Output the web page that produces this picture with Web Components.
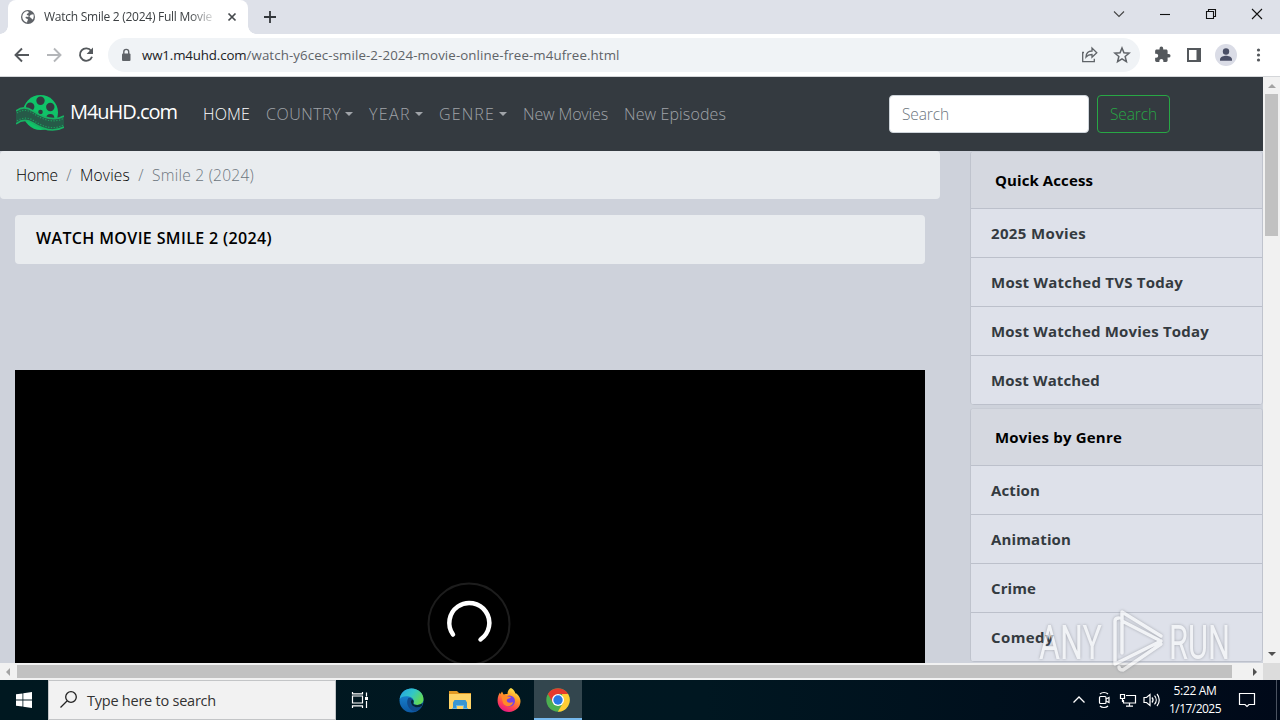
<!DOCTYPE html>
<html lang="en">
<head>
<meta charset="utf-8">
<title>Watch Smile 2 (2024) Full Movie</title>
<style>
html,body{margin:0;height:100%;overflow:hidden}
body{font-family:"Open Sans","Noto Sans",sans-serif;font-size:15px;color:#000}
</style>
</head>
<body>
<desk-screen></desk-screen>
<script>
const define=(name,markup,after)=>customElements.define(name,class extends HTMLElement{
  constructor(){
    super();
    const t=document.createElement('template');
    t.innerHTML=markup;
    this.attachShadow({mode:'open'}).append(t.content.cloneNode(true));
  }
  connectedCallback(){ if(after) after(this); }
});

/* One line of text whose tracking is set so that it spans the width in "w". */
define('fit-text',`<style>:host{display:inline-block;white-space:nowrap;flex:none}span{display:inline-block}</style><span><slot></slot></span>`,el=>{
  const s=el.shadowRoot.querySelector('span');
  const w=+el.getAttribute('w');
  s.style.letterSpacing='0';
  const n=el.textContent.length;
  s.style.letterSpacing=((w-s.getBoundingClientRect().width)/n)+'px';
  el.style.width=w+'px';
});

define('browser-tabs',`<style>
:host{display:flex;height:34px;background:#dee1e9;align-items:stretch;color:#3c4043;font-size:12px}
.tab{width:240px;margin-left:8px;background:#fff;border-radius:8px 8px 0 0;display:flex;align-items:center;box-sizing:border-box;padding-left:12px;position:relative}
.tab:before,.tab:after{content:"";position:absolute;bottom:0;width:8px;height:8px}
.tab:before{left:-8px;background:radial-gradient(circle at 0 0,#dee1e9 7.5px,#fff 8px)}
.tab:after{right:-8px;background:radial-gradient(circle at 100% 0,#dee1e9 7.5px,#fff 8px)}
.t{margin-left:8px;width:170px;overflow:hidden;height:18px;line-height:17px;-webkit-mask:linear-gradient(90deg,#000 145px,transparent 174px);mask:linear-gradient(90deg,#000 145px,transparent 174px)}
.x{margin-left:10px}.plus{margin:10px 0 0 15px}
.win{margin:7px 16px 0 auto;display:flex;gap:0}
svg{display:block;flex:none}
</style>
<div class="tab"><svg width="16" height="16" viewBox="0 0 16 16"><circle cx="8" cy="8" r="7" fill="#5f6368"/><path d="M2.3 7.5C2.5 4.7 4.4 2.6 7 2.3c1.2-.1 2 .5 1.6 1.5-.3.8-1.5.6-1.8 1.4-.2.8.5 1 1.1 1 1 .2 1 1.3.3 1.6-.9.4-2.2-.5-2.6.5-.3 1 .6 1.4 1.4 1.5 1 .2 1.2 1.2.6 1.8-.4.4-.4 1.2-.5 2C4.500 13 2.200 10.500 2.300 7.500ZM9.500 7.200l1.300-1.500 2.600-.5c.5 1.400.5 3.500-.5 5.200-.8-.1-1.500-.6-1.600-1.400-.6-.2-1.600-.7-1.800-1.800Z" fill="#fff"/></svg>
<div class="t"><fit-text w="168">Watch Smile 2 (2024) Full Movie</fit-text></div>
<svg class="x" width="16" height="16" viewBox="0 0 16 16"><path d="m4.500 4.500 7 7m0-7-7 7" stroke="#45494d" stroke-width="1.700"/></svg></div>
<svg class="plus" width="14" height="14"><path d="M7 1v12M1 7h12" stroke="#33373b" stroke-width="1.800"/></svg>
<svg class="win" width="152" height="15" viewBox="0 0 152 15" fill="none" stroke="#111" stroke-width="1.100"><path d="m2 4.500 5 5 5-5" stroke="#444"/><path d="M48 7.500h10"/><path d="M94.500 4.500h7v7h-7zM96.500 4.500v-2h7v7h-2"/><path d="m140 2 10 10m0-10-10 10"/></svg>`);

define('browser-toolbar',`<style>
:host{display:flex;height:43px;box-sizing:border-box;border-bottom:1px solid #d4d6d9;background:#fff;align-items:center;padding:0 0 0 12px;color:#5f6368;font-size:13.300px}
svg{display:block;flex:none}
.b{margin-right:12px}
.url{flex:none;width:1032px;height:34px;border-radius:17px;background:#f0f3f6;box-sizing:border-box;padding:0 8px 0 10px;display:flex;align-items:center}
.url b{font-weight:400;color:#202124}.lock{margin:0 8px 0 0}
.sp{flex:1}.r{margin-left:12px}
</style>
<svg class="b" width="20" height="20" viewBox="0 0 20 20" fill="none" stroke="#54585c" stroke-width="1.900"><path d="M17 10H4M10 3.500 3.500 10l6.500 6.500"/></svg>
<svg class="b" width="20" height="20" viewBox="0 0 20 20" fill="none" stroke="#b4b6b9" stroke-width="1.900"><path d="M3 10h13M10 3.500l6.500 6.500-6.500 6.500"/></svg>
<svg class="b" width="20" height="20" viewBox="0 0 20 20"><path d="M15.200 6A6.200 6.200 0 1 0 16 11.700" fill="none" stroke="#54585c" stroke-width="1.900"/><path d="M17 2.600V9h-6.400Z" fill="#54585c"/></svg>
<div class="url"><svg class="lock" width="16" height="16" viewBox="0 0 16 16"><rect x="4" y="6.500" width="8.500" height="7.500" rx="1" fill="#5f6368"/><path d="M5.800 7V4.800a2.450 2.450 0 0 1 4.900 0V7" fill="none" stroke="#5f6368" stroke-width="1.400"/></svg>
<b><fit-text w="104.500">ww1.m4uhd.com</fit-text></b><fit-text w="373">/watch-y6cec-smile-2-2024-movie-online-free-m4ufree.html</fit-text>
<span class="sp"></span>
<svg width="20" height="20" viewBox="0 0 20 20" fill="none" stroke="#5f6368" stroke-width="1.300"><path d="M4 7.500H2.700v9.200h11.600v-3M6 12c.2-4 2.200-6 6-6V3l4.800 4.700-4.800 4.600V9.500c-2.500 0-4.500.7-6 2.500Z"/></svg>
<svg class="r" width="20" height="20" viewBox="0 0 20 20"><path d="m10 3 1.950 4.800 5.150.4-3.950 3.350 1.250 5L10 13.850l-4.400 2.700 1.250-5L2.900 8.200l5.150-.4Z" fill="none" stroke="#5f6368" stroke-width="1.500"/></svg></div>
<svg class="r" width="20" height="20" viewBox="0 0 24 24" fill="#54585c"><path d="M20.500 11H19V7c0-1.100-.9-2-2-2h-4V3.500a2.500 2.500 0 0 0-5 0V5H4c-1.100 0-2 .9-2 2v3.800h1.500a2.700 2.700 0 0 1 0 5.400H2V20c0 1.100.9 2 2 2h3.800v-1.500a2.700 2.700 0 0 1 5.400 0V22H17c1.100 0 2-.9 2-2v-4h1.500a2.500 2.500 0 0 0 0-5z" transform="translate(2 1) scale(.88)"/></svg>
<svg class="r" width="20" height="20" viewBox="0 0 20 20"><path d="M3 3h14v14H3zM5 5v10h7.500V5Z" fill="#54585c" fill-rule="evenodd"/></svg>
<svg width="24" height="24" viewBox="0 0 24 24" style="margin-left:10px"><circle cx="12" cy="12" r="11" fill="#dadce6"/><circle cx="12" cy="8.500" r="3.200" fill="#4a4f66"/><path d="M6 17.700v-1.500c0-2.500 4-3.500 6-3.500s6 1 6 3.500v1.500Z" fill="#4a4f66"/></svg>
<svg width="20" height="20" viewBox="0 0 20 20" fill="#54585c" style="margin-left:10px"><circle cx="10.500" cy="5" r="1.600"/><circle cx="10.500" cy="10" r="1.600"/><circle cx="10.500" cy="15" r="1.600"/></svg>`);

define('nav-link',`<style>
:host{display:inline-flex;align-items:center;color:#a0a4a9;font-weight:300;font-size:16px;line-height:24px}
:host([active]){color:#fff}
i{display:none;border:4px solid transparent;border-top-color:#a0a4a9;border-bottom:0;margin-left:4px}
:host([drop]) i{display:block}
</style><slot></slot><i></i>`);

define('site-nav',`<style>
:host{display:flex;height:74px;background:#343a40;align-items:center;padding-left:16px;box-sizing:border-box;color:#fff}
svg{display:block;flex:none;margin-top:-2px}
.brand{font-size:20px;font-weight:400;margin:-4px 26px 0 6px;line-height:26px}
nav{display:flex;gap:16px;margin-top:-1px}
.in{width:200px;height:38px;box-sizing:border-box;border-radius:4px;background:#fff;border:1px solid #ced4da;margin-left:163px;padding-left:12px;display:flex;align-items:center;color:#6c757d;font-weight:300;font-size:15.500px}
.btn{width:73px;height:38px;box-sizing:border-box;border:1px solid #28a745;border-radius:4px;margin-left:8px;display:flex;align-items:center;justify-content:center;color:#28a745;font-weight:300;font-size:15.500px}
</style>
<svg width="48" height="38" viewBox="0 0 48 38"><circle cx="24.500" cy="18.500" r="17.500" fill="#10c368"/><g fill="#343a40"><circle cx="24.500" cy="6.800" r="4.200"/><circle cx="14.200" cy="12.800" r="4.200"/><circle cx="34.300" cy="13" r="4.200"/><circle cx="24.500" cy="18" r="2.300"/><circle cx="34.300" cy="24" r="4"/></g><path d="M0 17c5-4 11-4 17 0 9 6 20 11 31 5v11c-11 6-22 2-31-4-6-4-12-3-17 1Z" fill="#265a48"/><path d="M0 17c5-4 11-4 17 0 9 6 20 11 31 5M0 30c5-4 11-5 17-1 9 6 20 10 31 4" fill="none" stroke="#18b263" stroke-width="1.600"/><path d="M1 19c5-3.500 10-3.500 15.500 0 9 6 20 11 31 5.500M1 27c5-3.500 11-4 16.500-.5 9 6 19 10 30 4.500" fill="none" stroke="#1d9a5d" stroke-width="1.200" stroke-dasharray="1.300 1.500"/></svg>
<div class="brand"><fit-text w="107">M4uHD.com</fit-text></div>
<nav><nav-link active><fit-text w="47">HOME</fit-text></nav-link><nav-link drop><fit-text w="75">COUNTRY</fit-text></nav-link><nav-link drop><fit-text w="42">YEAR</fit-text></nav-link><nav-link drop><fit-text w="56">GENRE</fit-text></nav-link><nav-link><fit-text w="85">New Movies</fit-text></nav-link><nav-link><fit-text w="102">New Episodes</fit-text></nav-link></nav>
<div class="in"><fit-text w="47">Search</fit-text></div><div class="btn"><fit-text w="47">Search</fit-text></div>`);

define('crumb-bar',`<style>
:host{display:flex;height:48px;background:#e9ecef;border-radius:4px;align-items:center;padding-left:16px;box-sizing:border-box;font-weight:300;font-size:15.500px;color:#6c757d}
.k{color:#000}i{font-style:normal;width:22px;text-align:center}
</style><fit-text class="k" w="42">Home</fit-text><i>/</i><fit-text class="k" w="50">Movies</fit-text><i>/</i><fit-text w="102">Smile 2 (2024)</fit-text>`);

define('title-card',`<style>:host{display:flex;height:49px;margin:16px 15px 0;border-radius:4px;background:#e9ecef;padding:0 0 3px 21px;box-sizing:border-box;align-items:center;font-weight:600;font-size:16px}</style><slot></slot>`);

define('video-player',`<style>
:host{display:flex;height:293px;margin:106px 15px 0;background:#000;justify-content:center;overflow:hidden}
svg{display:block;margin:212px 3px 0 0;flex:none}
</style><svg width="84" height="84" viewBox="0 0 84 84" fill="none"><circle cx="42" cy="42" r="40.500" stroke="#1d1d1d" stroke-width="2"/><path d="M26 52.500A20 20 0 1 1 53.500 57.500" stroke="#fff" stroke-width="4.500" stroke-linecap="round"/></svg>`);

define('side-item',`<style>:host{display:flex;align-items:center;height:49px;box-sizing:border-box;padding-left:20px;border-bottom:1px solid #bcc0cb;font-weight:700;font-size:15px;color:#343a40}</style><slot></slot>`);
define('side-list',`<style>
:host{display:block;border:1px solid #bfc3cd;border-top-color:#c8ccd5;border-bottom:0;border-radius:4px;background:#dee1ea;box-sizing:border-box;margin-bottom:3px;flex:none;overflow:hidden}
header{height:57px;box-sizing:border-box;border-bottom:1px solid #bcc0cb;background:#d5d8e0;display:flex;align-items:center;padding:0 0 0 24px;font-weight:700;font-size:15px}
</style><header><slot name="head"></slot></header><slot></slot>`);

define('movie-page',`<style>
:host{display:flex;flex-direction:column;width:1263px;height:586px;overflow:hidden;background:#ced2db}
.row{display:flex;flex:1;min-height:0}
main{width:940px;flex:none}
aside{width:293px;margin-left:30px;display:flex;flex-direction:column;overflow:hidden}
</style><site-nav></site-nav><div class="row"><main><crumb-bar></crumb-bar>
<title-card><fit-text w="236">WATCH MOVIE SMILE 2 (2024)</fit-text></title-card><video-player></video-player></main>
<aside><side-list><fit-text slot="head" w="98">Quick Access</fit-text>
<side-item><fit-text w="95">2025 Movies</fit-text></side-item><side-item><fit-text w="192">Most Watched TVS Today</fit-text></side-item><side-item><fit-text w="218">Most Watched Movies Today</fit-text></side-item><side-item><fit-text w="109">Most Watched</fit-text></side-item></side-list>
<side-list><fit-text slot="head" w="127">Movies by Genre</fit-text>
<side-item><fit-text w="49">Action</fit-text></side-item><side-item><fit-text w="80">Animation</fit-text></side-item><side-item><fit-text w="45">Crime</fit-text></side-item><side-item><fit-text w="63">Comedy</fit-text></side-item></side-list></aside></div>`);

define('scroll-v',`<style>
:host{display:flex;flex-direction:column;width:17px;height:586px;background:#f1f1f1;align-items:center}
i{border:4px solid transparent;border-top:0;border-bottom-color:#a3a3a3;margin:7px 0 6px}
b{width:13px;height:142px;background:#c1c1c1}
u{border:4px solid transparent;border-bottom:0;border-top-color:#505050;margin:auto 0 7px}
</style><i></i><b></b><u></u>`);
define('scroll-h',`<style>
:host{display:flex;height:17px;background:#f1f1f1;align-items:center}
i{border:4px solid transparent;border-left:0;border-right-color:#a3a3a3;margin:0 7px 0 6px}
b{width:1215px;height:13px;background:#c1c1c1}
u{border:4px solid transparent;border-right:0;border-left-color:#505050;margin-left:21px}
s{margin-left:auto;width:17px;height:17px;background:#dcdcdc}
</style><i></i><b></b><u></u><s></s>`);

define('task-bar',`<style>
:host{display:flex;height:40px;background:linear-gradient(90deg,#001820,#001721 55%,#000919);color:#fff}
svg{display:block;flex:none}
.start,.app{width:48px;display:flex;align-items:center;justify-content:center}
.app{width:49px}
.search{width:288px;box-sizing:border-box;background:#f2f2f2;border:1px solid #c3c5c7;display:flex;align-items:center;color:#333;font-size:14.500px;padding-left:10px}
.search fit-text{margin-left:8px}
.on{width:48px;background:#33464e;box-shadow:inset 0 -2px #76b9ed}
.tray{margin-left:auto;display:flex;align-items:center}
.clock{width:62px;text-align:center;font-size:12px;line-height:18px;margin-left:3px;display:flex;flex-direction:column;align-items:center;padding-bottom:1px}
.note{margin:0 20px 0 12px}.edge{width:1px;height:40px;background:#4a5260;margin-right:3px}
</style>
<div class="start"><svg width="16" height="16" viewBox="0 0 16 16" fill="#fff"><path d="M0 2.300 6.500 1.400v6.200H0zM7.300 1.300 16 0v7.600H7.300zM0 8.400h6.500v6.200L0 13.700zM7.300 8.400H16V16l-8.700-1.300z"/></svg></div>
<div class="search"><svg width="20" height="20" viewBox="0 0 20 20" fill="none" stroke="#222" stroke-width="1.300"><circle cx="12" cy="7" r="5.300"/><path d="m8 11-6.500 6.500"/></svg><fit-text w="129">Type here to search</fit-text></div>
<div class="app" style="width:48px"><svg width="18" height="18" viewBox="0 0 18 18" fill="none" stroke="#fff" stroke-width="1.200"><path d="M1.500 5h10v7h-10zM1.500 1v1.800h10V1M1.500 17v-2.200h10V17M15.500 1.500v4M15.500 10v7"/><path d="M14 6h3v3h-3z" fill="#fff" stroke="none"/></svg></div>
<div class="app" style="width:54px"><svg width="25" height="25" viewBox="0 0 24 24"><defs><linearGradient id="e1" x1="0" y1="0" x2="1" y2=".5"><stop stop-color="#249fe4"/><stop offset=".55" stop-color="#32c6c7"/><stop offset="1" stop-color="#62d957"/></linearGradient><linearGradient id="e2" x1="0" y1="0" x2="0" y2="1"><stop stop-color="#1c8fdd"/><stop offset="1" stop-color="#0c59a4"/></linearGradient></defs><circle cx="12" cy="12" r="11.500" fill="url(#e2)"/><path d="M.6 11C1.500 4 6.500.5 12 .5c7 0 11.500 5 11.500 10 0 4-3 5.700-6 5.700-2.500 0-4-.9-3.500-2 .6-1.300.3-5.200-4.500-6C5.500 7.500 1.500 8.500.6 11Z" fill="url(#e1)"/><path d="M9 9.500C6 14 9 21 15 22.500c3-.5 5.500-2.500 7-5-4 2-10 1-10.500-3.500-.2-2 1-3 1.500-3-1-1.500-2.500-2-4-1.500Z" fill="#114a8b"/><path d="M13 11c1.500 1 1.200 2.500.8 3.300-.4 1 1 1.900 3.700 1.900 2 0 4-.7 5.200-2-.2 1.500-.5 2.500-1 3.400-4 2-9.600.8-10.200-3.600-.2-2 .8-2.800 1.500-3Z" fill="#052638"/></svg></div>
<div class="app" style="width:44px"><svg width="22" height="20" viewBox="0 0 22 20"><path d="M0 1h8l2 2h12v5H0z" fill="#e29a24"/><path d="M0 4h22v15H0z" fill="#ffd467"/><path d="M4 19v-6.500L5.500 10h11l1.500 2.500V19h-4v-3H8v3Z" fill="#3896d2"/><path d="M3 19h5v-3h6v3h5v-1h-4v-3H7v3H3Z" fill="#66b5e5"/></svg></div>
<div class="app" style="width:54px"><svg width="24" height="24" viewBox="0 0 24 24"><defs><linearGradient id="f1" x1=".8" y1="0" x2=".3" y2="1"><stop stop-color="#fff44f"/><stop offset=".4" stop-color="#ff9a25"/><stop offset=".75" stop-color="#ff4055"/><stop offset="1" stop-color="#e31587"/></linearGradient></defs><path d="M14 0c3 1.500 4 4 4.500 5.500 1-.2 1.500.5 1.700.7 2 2 3.300 4 3.300 7A11.400 10.800 0 0 1 .6 13C.4 9 2 6 3 4.500l.3 1.700L5 3.500l1.500 3c2-1 3-.5 4-.5C10.500 3 12 1 14 0Z" fill="url(#f1)"/><circle cx="12.500" cy="13" r="5.500" fill="#7542e5"/><path d="M4 7c3-1 5 .2 7 1.500l3 .5c-.5 1.500-3 1.500-4 2.500-.8 1.500.5 3.500 3 3.200 1.500-.2 2.500-.8 3-.2C15 19 8 19.500 6 15Z" fill="#ff8a28"/></svg></div>
<div class="app on" style="margin-left:-2px"><svg width="24" height="24" viewBox="0 0 24 24"><circle cx="12" cy="12" r="11.700" fill="#4caf50"/><path d="M1.900 6.100A11.700 11.700 0 0 1 22.100 6.100H12L7 15Z" fill="#e53a2e"/><path d="M22.100 6.100A11.700 11.700 0 0 1 11.800 23.700L17 15l-1-9Z" fill="#ffcd35"/><circle cx="12" cy="12" r="6" fill="#fff"/><circle cx="12" cy="12" r="4.700" fill="#2779e4"/></svg></div>
<div class="tray">
<svg width="14" height="14" viewBox="0 0 14 14" fill="none" stroke="#fff" stroke-width="1.300"><path d="m1.500 9.500 5.500-5.500 5.500 5.500"/></svg>
<svg width="16" height="18" viewBox="0 0 16 18" fill="none" stroke="#fff" stroke-width="1.200" style="margin-left:10px"><rect x="3.500" y="5.500" width="6.500" height="7" rx="1"/><path d="m10 8 3-1.500v5L10 10M4 3c2-2 6-2 8 0M4 15c2 2 6 2 8 0"/></svg>
<svg width="18" height="16" viewBox="0 0 18 16" fill="none" stroke="#fff" stroke-width="1.200" style="margin-left:7px"><path d="M7 3.500h9.500v7.500h-12V8M10.500 11v3M7 14.200h7M1.500 2.500h4v4h-4zM3.500 6.500V10"/></svg>
<svg width="18" height="16" viewBox="0 0 18 16" fill="none" stroke="#fff" stroke-width="1.200" style="margin-left:6px"><path d="M1 5.500h2.500L7 2.500v11l-3.500-3H1zM9 5.500c1.300 1.500 1.300 3.500 0 5M11.500 3.700c2.300 2.500 2.300 6.100 0 8.600M14 2c3 3.500 3 8.500 0 12"/></svg>
<div class="clock"><fit-text w="43">5:22 AM</fit-text><fit-text w="52">1/17/2025</fit-text></div>
<svg class="note" width="18" height="18" viewBox="0 0 18 18" fill="none" stroke="#fff" stroke-width="1.200"><path d="M1.500 2.500h15v11H11l-2 2-2-2H1.500z"/></svg><span class="edge"></span></div>`);

define('run-watermark',`<style>
:host{display:block;position:absolute;left:1034px;top:604px;opacity:.6;pointer-events:none}
svg{display:block;filter:drop-shadow(0 0 1.500px #7d8188)}
</style><svg width="204" height="72" viewBox="0 0 204 72" fill="#fff" font-family="Roboto,sans-serif" font-weight="400" font-size="49"><text x="5" y="55" textLength="63" lengthAdjust="spacingAndGlyphs">ANY</text><text x="135" y="55" textLength="61" lengthAdjust="spacingAndGlyphs">RUN</text><g fill="none" stroke="#fff" stroke-width="3.500" stroke-linejoin="round" stroke-linecap="round"><path d="M81 60V17q0-3 4-3M88 49V8l39 24M81 60 127 37M127 40 89 66q-4 0-4-3M88 17l37 19"/></g></svg>`);

define('desk-screen',`<style>
:host{display:flex;flex-direction:column;width:1280px;height:720px;overflow:hidden;position:relative;background:#fff}
.view{display:flex;height:586px}
browser-tabs,browser-toolbar,scroll-h,task-bar{flex:none}
</style><browser-tabs></browser-tabs><browser-toolbar></browser-toolbar><div class="view"><movie-page></movie-page><scroll-v></scroll-v></div><scroll-h></scroll-h><task-bar></task-bar><run-watermark></run-watermark>`);
</script>
</body>
</html>
